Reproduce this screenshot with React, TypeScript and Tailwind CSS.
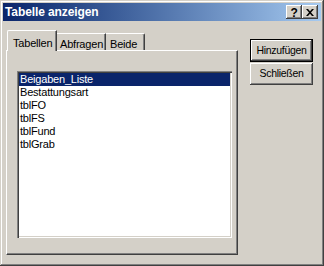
import React from "react";

const font = { fontFamily: '"Liberation Sans", Arial, sans-serif' };

export default function App() {
  const items = ["Beigaben_Liste", "Bestattungsart", "tblFO", "tblFS", "tblFund", "tblGrab"];
  return (
    <div
      className="w-[324px] h-[266px] bg-[#d4d0c8] p-[3px] flex flex-col shadow-[inset_-1px_-1px_#404040,inset_1px_1px_#d4d0c8,inset_-2px_-2px_#808080,inset_2px_2px_#ffffff] text-[11px] tracking-[-0.2px] text-black"
      style={font}
    >
      {/* Title bar */}
      <div className="h-[18px] flex items-center bg-gradient-to-r from-[#0a246a] to-[#a6caf0] pl-[2px] pr-[3px]">
        <span className="text-white font-bold text-[12px] tracking-[-0.1px] leading-[18px] flex-1">Tabelle anzeigen</span>
        <div className="w-[16px] h-[14px] bg-[#d4d0c8] flex items-center justify-center shadow-[inset_-1px_-1px_#404040,inset_1px_1px_#ffffff,inset_-2px_-2px_#808080,inset_2px_2px_#d4d0c8]">
          <span className="font-bold text-[12px] leading-[12px] mt-[1px]">?</span>
        </div>
        <div className="w-[16px] h-[14px] bg-[#d4d0c8] flex items-center justify-center shadow-[inset_-1px_-1px_#404040,inset_1px_1px_#ffffff,inset_-2px_-2px_#808080,inset_2px_2px_#d4d0c8]">
          <svg width="8" height="7" viewBox="0 0 8 7">
            <path d="M0 0h2l2 2.2L6 0h2L5 3.5 8 7H6L4 4.8 2 7H0l3-3.5z" fill="#000" />
          </svg>
        </div>
      </div>

      {/* Body */}
      <div className="flex flex-1">
        {/* Tab control */}
        <div className="ml-[3px] mt-[10px] w-[232px] flex flex-col">
          <div className="h-[19px] flex items-end relative z-10">
            <div className="ml-[1px] w-[50px] h-[21px] mb-[-1px] bg-[#d4d0c8] border-t border-l border-white rounded-tl-[2px] shadow-[inset_-1px_0_#808080] border-r border-r-[#404040] flex items-start pt-[4px] pl-[5px]">
              Tabellen
            </div>
            <div className="w-[49px] h-[17px] bg-[#d4d0c8] border-t border-white shadow-[inset_-1px_0_#808080] border-r border-r-[#404040] flex items-start pt-[2px] pl-[3px]">
              Abfragen
            </div>
            <div className="w-[39px] h-[17px] bg-[#d4d0c8] border-t border-white shadow-[inset_-1px_0_#808080] border-r border-r-[#404040] rounded-tr-[2px] flex items-start pt-[2px] pl-[4px]">
              Beide
            </div>
          </div>
          <div className="h-[205px] border-t border-l border-white border-r border-b border-r-[#404040] border-b-[#404040] shadow-[inset_-1px_-1px_#808080] pl-[10px] pt-[20px] pr-[5px]">
            <div className="w-[215px] h-[167px] bg-white shadow-[inset_1px_1px_#808080,inset_2px_2px_#404040,inset_-1px_-1px_#ffffff,inset_-2px_-2px_#d4d0c8] p-[2px]">
              {items.map((it, i) => (
                <div
                  key={it}
                  className={
                    i === 0
                      ? "h-[13px] leading-[13px] pl-[1px] bg-[#0a246a] text-white"
                      : "h-[13px] leading-[13px] pl-[1px]"
                  }
                >
                  {it}
                </div>
              ))}
            </div>
          </div>
        </div>

        {/* Buttons */}
        <div className="ml-[12px] mt-[18px] flex flex-col gap-[1px] text-[10.5px] tracking-[-0.3px]">
          <div className="w-[63px] h-[23px] border border-black">
            <div className="w-full h-full flex items-center justify-center shadow-[inset_-1px_-1px_#404040,inset_1px_1px_#ffffff,inset_-2px_-2px_#808080,inset_2px_2px_#d4d0c8]">
              Hinzufügen
            </div>
          </div>
          <div className="w-[63px] h-[22px] flex items-center justify-center shadow-[inset_-1px_-1px_#404040,inset_1px_1px_#ffffff,inset_-2px_-2px_#808080,inset_2px_2px_#d4d0c8]">
            Schließen
          </div>
        </div>
      </div>
    </div>
  );
}
